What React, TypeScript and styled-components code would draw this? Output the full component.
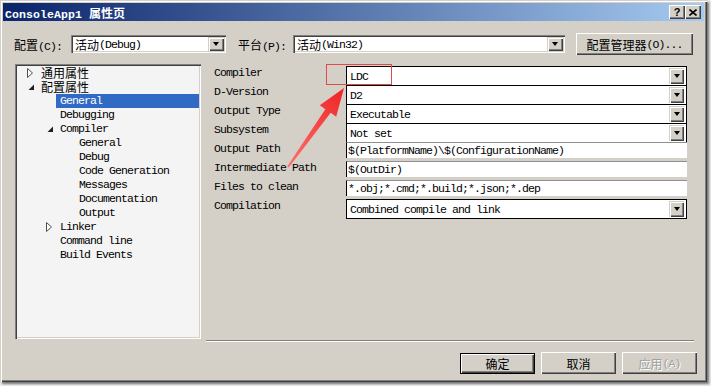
import styled, { createGlobalStyle } from 'styled-components';

const GlobalStyle = createGlobalStyle`
  html, body {
    margin: 0;
    padding: 0;
    background: #ececec;
  }
`;

const Page = styled.div`
  position: relative;
  width: 711px;
  height: 386px;
  overflow: hidden;
`;

const Window = styled.div`
  width: 707px;
  height: 382px;
  box-sizing: border-box;
  padding: 3px;
  display: flex;
  flex-direction: column;
  background: #d4d0c8;
  box-shadow: inset 1px 1px 0 #d4d0c8, inset 2px 2px 0 #fff, inset -1px -1px 0 #404040,
    inset -2px -2px 0 #808080, 2px 2px 2px rgba(0, 0, 0, 0.5);
  font-family: "Liberation Mono", "Noto Sans CJK SC", monospace;
  font-size: 11.5px;
  letter-spacing: -0.9px;
  color: #000;
`;

const Cjk = styled.span`
  font-family: "Noto Sans CJK SC", sans-serif;
  font-size: 12px;
  letter-spacing: 0;
`;

const TitleBar = styled.div`
  height: 18px;
  display: flex;
  align-items: center;
  padding: 0 3px 0 2px;
  background: linear-gradient(to right, #0a246a, #a6caf0);
`;

const Title = styled.div`
  flex: 1;
  color: #fff;
  font-weight: bold;
  letter-spacing: 0.1px;
  white-space: pre;
`;

const CaptionButton = styled.div`
  width: 16px;
  height: 14px;
  box-sizing: border-box;
  display: flex;
  align-items: center;
  justify-content: center;
  background: #d4d0c8;
  box-shadow: inset 1px 1px 0 #fff, inset -1px -1px 0 #404040, inset -2px -2px 0 #808080;
  font-family: "Liberation Sans", sans-serif;
  font-weight: bold;
  font-size: 11px;
  letter-spacing: 0;
  line-height: 1;
`;

const TopRow = styled.div`
  height: 22px;
  margin-top: 12px;
  padding-left: 11px;
  display: flex;
  align-items: center;
`;

const RowLabel = styled.div<{ $w: number; $gap?: number }>`
  width: ${(p) => p.$w}px;
  margin-left: ${(p) => p.$gap ?? 0}px;
  white-space: nowrap;
`;

const Combo = styled.div<{ $w: number }>`
  width: ${(p) => p.$w}px;
  height: 18px;
  box-sizing: border-box;
  padding: 2px;
  display: flex;
  align-items: stretch;
  background: #fff;
  box-shadow: inset 1px 1px 0 #808080, inset 2px 2px 0 #404040, inset -1px -1px 0 #fff,
    inset -2px -2px 0 #d4d0c8;
`;

const ComboText = styled.div`
  flex: 1;
  display: flex;
  align-items: center;
  padding-left: 2px;
  white-space: nowrap;
`;

const DropButton = styled.div`
  width: 16px;
  flex: none;
  display: flex;
  align-items: center;
  justify-content: center;
  background: #d4d0c8;
  box-shadow: inset 1px 1px 0 #d4d0c8, inset 2px 2px 0 #fff, inset -1px -1px 0 #404040,
    inset -2px -2px 0 #808080;

  &::after {
    content: '';
    border-left: 3.5px solid transparent;
    border-right: 3.5px solid transparent;
    border-top: 4px solid #000;
  }
`;

const Button = styled.div<{ $w: number; $default?: boolean; $disabled?: boolean }>`
  width: ${(p) => p.$w}px;
  height: ${(p) => (p.$default ? 21 : 22)}px;
  box-sizing: border-box;
  display: flex;
  align-items: center;
  justify-content: center;
  background: #d4d0c8;
  white-space: nowrap;
  color: ${(p) => (p.$disabled ? '#a0a0a0' : '#000')};
  text-shadow: ${(p) => (p.$disabled ? '1px 1px 0 #fff' : 'none')};
  border: ${(p) => (p.$default ? '1px solid #000' : 'none')};
  box-shadow: inset 1px 1px 0 #fff, inset -1px -1px 0 #404040, inset -2px -2px 0 #808080;
`;

const Body = styled.div`
  margin-top: 9px;
  padding-left: 12px;
  height: 278px;
  display: flex;
  gap: 5px;
`;

const Tree = styled.div`
  width: 186px;
  height: 275px;
  box-sizing: border-box;
  padding: 2px;
  background: #f4f4f4;
  box-shadow: inset 1px 1px 0 #808080, inset 2px 2px 0 #404040, inset -1px -1px 0 #fff,
    inset -2px -2px 0 #d4d0c8;
`;

const TreeRow = styled.div<{ $indent: number }>`
  height: 14px;
  display: flex;
  align-items: center;
  padding-left: ${(p) => p.$indent}px;
`;

const Expander = styled.div`
  width: 14px;
  height: 14px;
  flex: none;
  display: flex;
  align-items: center;
`;

const TreeLabel = styled.div<{ $selected?: boolean }>`
  flex: 1;
  height: 14px;
  line-height: 14px;
  margin-left: -4px;
  padding-left: 4px;
  white-space: nowrap;
  background: ${(p) => (p.$selected ? '#316ac5' : 'transparent')};
  color: ${(p) => (p.$selected ? '#fff' : '#000')};
`;

const PropPanel = styled.div`
  width: 488px;
  box-sizing: border-box;
  padding: 2px 7px 0 8px;
  box-shadow: inset 0 -1px 0 #fff, inset 0 -2px 0 #808080;
`;

const PropRow = styled.div`
  height: 19px;
  display: grid;
  grid-template-columns: 132px 341px;
  align-items: start;
`;

const PropName = styled.div`
  line-height: 14px;
  white-space: nowrap;
`;

const PropCombo = styled.div`
  height: 20px;
  box-sizing: border-box;
  border: 1px solid #000;
  background: #fff;
  display: flex;
  align-items: stretch;
  padding-right: 2px;

  ${DropButton} {
    margin: 1px 0;
    width: 15px;
  }
`;

const PropText = styled.div`
  height: 16px;
  box-sizing: border-box;
  border-left: 1px solid #000;
  border-top: 1px solid #909090;
  background: #fff;
  display: flex;
  align-items: center;
  padding-left: 1px;
  white-space: nowrap;
  overflow: hidden;
`;

const PropValue = styled.div`
  flex: 1;
  display: flex;
  align-items: center;
  padding-left: 3px;
  white-space: nowrap;
`;

const BottomRow = styled.div`
  margin-top: 10px;
  padding-right: 7px;
  display: flex;
  justify-content: flex-end;
  align-items: center;
  gap: 6px;
`;

const Overlay = styled.svg`
  position: absolute;
  left: 0;
  top: 0;
  pointer-events: none;
`;

type Node = { label: string; level: number; icon?: 'open' | 'closed'; cjk?: boolean; selected?: boolean };

const tree: Node[] = [
  { label: '通用属性', level: 0, icon: 'closed', cjk: true },
  { label: '配置属性', level: 0, icon: 'open', cjk: true },
  { label: 'General', level: 1, selected: true },
  { label: 'Debugging', level: 1 },
  { label: 'Compiler', level: 1, icon: 'open' },
  { label: 'General', level: 2 },
  { label: 'Debug', level: 2 },
  { label: 'Code Generation', level: 2 },
  { label: 'Messages', level: 2 },
  { label: 'Documentation', level: 2 },
  { label: 'Output', level: 2 },
  { label: 'Linker', level: 1, icon: 'closed' },
  { label: 'Command line', level: 1 },
  { label: 'Build Events', level: 1 },
];

const props = [
  { name: 'Compiler', value: 'LDC', kind: 'combo' },
  { name: 'D-Version', value: 'D2', kind: 'combo' },
  { name: 'Output Type', value: 'Executable', kind: 'combo' },
  { name: 'Subsystem', value: 'Not set', kind: 'combo' },
  { name: 'Output Path', value: '$(PlatformName)\\$(ConfigurationName)', kind: 'text' },
  { name: 'Intermediate Path', value: '$(OutDir)', kind: 'text' },
  { name: 'Files to clean', value: '*.obj;*.cmd;*.build;*.json;*.dep', kind: 'text' },
  { name: 'Compilation', value: 'Combined compile and link', kind: 'combo' },
];

function ExpandIcon({ open }: { open: boolean }) {
  if (open) {
    return (
      <svg width="7" height="7" viewBox="0 0 7 7" style={{ marginLeft: 1 }}>
        <polygon points="6,0.5 6,6 0.5,6" fill="#202020" />
      </svg>
    );
  }
  return (
    <svg width="7" height="10" viewBox="0 0 7 10">
      <polygon points="0.5,0.5 5.5,5 0.5,9.5" fill="#fff" stroke="#505050" strokeWidth="1" />
    </svg>
  );
}

export default function App() {
  return (
    <Page>
      <GlobalStyle />
      <Window>
        <TitleBar>
          <Title>
            ConsoleApp1 <Cjk style={{ fontWeight: 700 }}>属性页</Cjk>
          </Title>
          <CaptionButton>?</CaptionButton>
          <CaptionButton>
            <svg width="8" height="7" viewBox="0 0 8 7">
              <path d="M0.5 0.5 L7.5 6.5 M7.5 0.5 L0.5 6.5" stroke="#000" strokeWidth="1.6" />
            </svg>
          </CaptionButton>
        </TitleBar>

        <TopRow>
          <RowLabel $w={57}>
            <Cjk>配置</Cjk>(C):
          </RowLabel>
          <Combo $w={155}>
            <ComboText>
              <Cjk>活动</Cjk>(Debug)
            </ComboText>
            <DropButton />
          </Combo>
          <RowLabel $w={55} $gap={12}>
            <Cjk>平台</Cjk>(P):
          </RowLabel>
          <Combo $w={272}>
            <ComboText>
              <Cjk>活动</Cjk>(Win32)
            </ComboText>
            <DropButton />
          </Combo>
          <Button $w={117} style={{ marginLeft: 11 }}>
            <Cjk>配置管理器</Cjk>(O)...
          </Button>
        </TopRow>

        <Body>
          <Tree>
            {tree.map((n, i) => (
              <TreeRow key={i} $indent={10 + 19 * n.level}>
                <Expander>{n.icon && <ExpandIcon open={n.icon === 'open'} />}</Expander>
                <TreeLabel $selected={n.selected}>{n.cjk ? <Cjk>{n.label}</Cjk> : n.label}</TreeLabel>
              </TreeRow>
            ))}
          </Tree>
          <PropPanel>
            {props.map((p) => (
              <PropRow key={p.name}>
                <PropName>{p.name}</PropName>
                {p.kind === 'combo' ? (
                  <PropCombo>
                    <PropValue>{p.value}</PropValue>
                    <DropButton />
                  </PropCombo>
                ) : (
                  <PropText>{p.value}</PropText>
                )}
              </PropRow>
            ))}
          </PropPanel>
        </Body>

        <BottomRow>
          <Button $w={75} $default>
            <Cjk>确定</Cjk>
          </Button>
          <Button $w={75}>
            <Cjk>取消</Cjk>
          </Button>
          <Button $w={75} $disabled>
            <Cjk>应用</Cjk>(A)
          </Button>
        </BottomRow>
      </Window>

      <Overlay width="711" height="386" viewBox="0 0 711 386">
        <defs>
          <linearGradient id="arrowFill" x1="288" y1="167" x2="344" y2="88" gradientUnits="userSpaceOnUse">
            <stop offset="0" stopColor="#ff7070" />
            <stop offset="1" stopColor="#ee2424" />
          </linearGradient>
        </defs>
        <rect x="326.5" y="64.5" width="65" height="20" fill="none" stroke="#e24a4a" strokeWidth="1" />
        <polygon
          points="287.2,166.4 325.3,109.2 319.8,105.3 344,88 336.2,116.7 330.7,112.8 288.8,167.6"
          fill="url(#arrowFill)"
        />
      </Overlay>
    </Page>
  );
}
